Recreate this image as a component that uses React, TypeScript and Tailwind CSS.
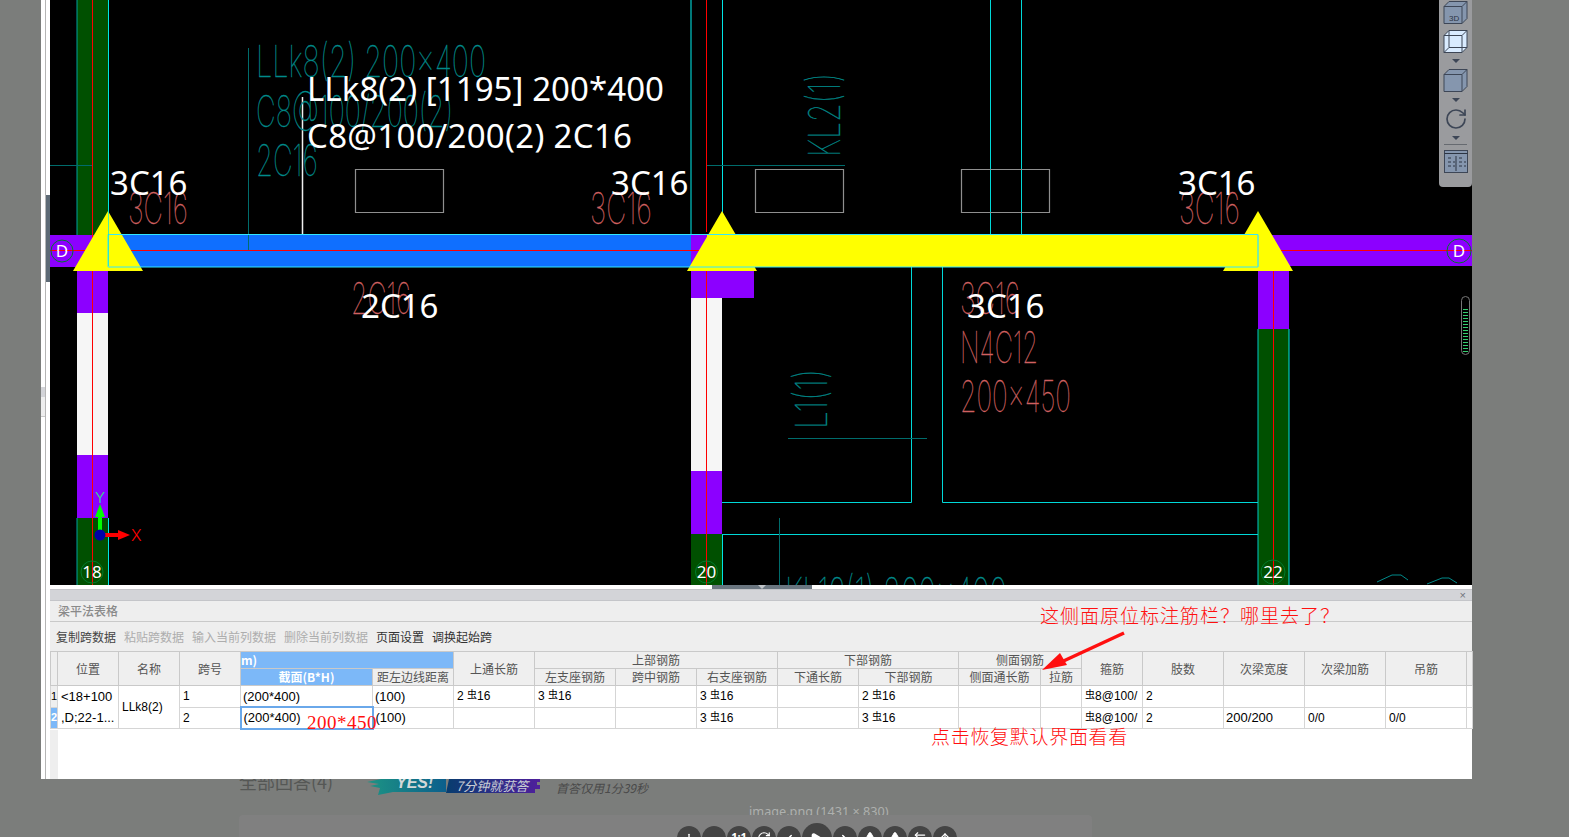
import { ChevronLeft, ChevronRight, Minus, Play, Plus, RotateCw, ArrowUp, ArrowLeftRight, Triangle as TriangleIcon } from 'lucide-react'

const CN = "font-['Noto_Sans_CJK_SC',sans-serif]"

// CAD labels are thin, narrow text squeezed to their measured length
function CadText({ x, y, len, size = 44, color, rotate, children }: { x: number; y: number; len: number; size?: number; color: string; rotate?: boolean; children: string }) {
  return (
    <text
      x={rotate ? 0 : x}
      y={rotate ? 0 : y}
      transform={rotate ? `translate(${x} ${y}) rotate(-90)` : undefined}
      textLength={len}
      lengthAdjust="spacingAndGlyphs"
      fontFamily="Inter, Roboto, sans-serif"
      fontWeight={100}
      fontSize={size}
      fill={color}
      stroke={color}
      strokeWidth={0.3}
    >
      {children}
    </text>
  )
}

function Label({ x, y, size = 33, len, children }: { x: number; y: number; size?: number; len?: number; children: string }) {
  return (
    <text x={x} y={y} textLength={len} fontFamily="'Noto Sans', sans-serif" fontSize={size} fill="#ffffff">
      {children}
    </text>
  )
}

function Bubble({ x, y, r = 11, label }: { x: number; y: number; r?: number; label: string }) {
  return (
    <g>
      <circle cx={x} cy={y} r={r} fill="none" stroke="#007a2c" strokeWidth={1} />
      <text x={x} y={y + 6} textAnchor="middle" fontFamily="'Noto Sans', sans-serif" fontSize={17} fill="#ffffff">
        {label}
      </text>
    </g>
  )
}

function Triangle({ x }: { x: number }) {
  return <polygon points={`${x},211 ${x - 35},271 ${x + 35},271`} fill="#ffff00" />
}

function CadCanvas() {
  const teal = '#008a8a'
  const dull = '#d06060'
  const cyan = '#00e5e5'
  return (
    <svg width={1422} height={585} viewBox="50 0 1422 585" className="block bg-black">
      {/* column 18 */}
      <rect x={77} y={0} width={31} height={235} fill="#005000" />
      <rect x={77} y={271} width={31} height={42} fill="#8c00ff" />
      <rect x={77} y={313} width={31} height={142} fill="#f6f6f6" />
      <rect x={77} y={455} width={31} height={63} fill="#8c00ff" />
      <rect x={77} y={518} width={31} height={67} fill="#005000" />
      <path d="M77 0V235M77 518V585" stroke="#00a0a0" />
      <path d="M108.5 0V235M108.5 518V585" stroke={cyan} />
      <path d="M50 165.5H92" stroke="#006c6c" />

      {/* column 20 */}
      <rect x={691} y={271} width={63} height={27} fill="#8c00ff" />
      <rect x={691} y={298} width={31} height={173} fill="#f6f6f6" />
      <rect x={691} y={471} width={31} height={63} fill="#8c00ff" />
      <rect x={691} y={534} width={31} height={51} fill="#005000" />
      <path d="M691 0V235" stroke="#00a0a0" strokeWidth={1.5} />
      <path d="M722.5 0V235M722.5 534V585" stroke={cyan} />

      {/* column 22 */}
      <rect x={1258} y={271} width={31} height={58} fill="#8c00ff" />
      <rect x={1258} y={329} width={31} height={256} fill="#005000" />
      <path d="M1258 329V585" stroke="#00c8c8" />
      <path d="M1289 329V585" stroke={cyan} />

      {/* walls and secondary beams */}
      <path d="M911.5 267V502.5H722M942.5 267V502.5H1258M722 534.5H1258M990.5 0V235M1021.5 0V235" fill="none" stroke="#00d8d8" />
      <path d="M779.5 518V585M788 438.5H927M707 165.5H845M248.5 48V250" fill="none" stroke="#006c6c" strokeWidth={1} />

      {/* opening boxes */}
      <path d="M355.5 169.5H443.5V212.5H355.5ZM755.5 169.5H843.5V212.5H755.5ZM961.5 169.5H1049.5V212.5H961.5Z" fill="none" stroke="#8f8f8f" strokeWidth={1.2} />
      <path d="M302.5 97V235" stroke="#f0f0f0" strokeWidth={1.5} />

      {/* beam D */}
      <rect x={50} y={235} width={58} height={32} fill="#8c00ff" />
      <rect x={108} y={235} width={583} height={32} fill="#0f6fff" />
      <rect x={691} y={235} width={16} height={32} fill="#8c00ff" />
      <rect x={707} y={235} width={551} height={32} fill="#ffff00" />
      <rect x={1258} y={235} width={214} height={31} fill="#8c00ff" />
      <path d="M248.5 235V250" stroke="#006c6c" />
      <path d="M50 250.5H700M1273 250.5H1472" stroke="#ff0000" />
      <path d="M92.5 0V238M706.5 0V232" stroke="#ff0000" />
      <Triangle x={108} />
      <Triangle x={722} />
      <Triangle x={1258} />
      <rect x={707} y={235} width={551} height={32} fill="#ffff00" />
      <path d="M108 267V234.5H1258V267H108" fill="none" stroke="#33e6ff" strokeWidth={1} />
      <path d="M1258 235V267" stroke="#66e8c0" strokeWidth={1} />
      <path d="M108.5 211V266" stroke={cyan} strokeOpacity={0.7} />
      <path d="M92.5 271V585M706.5 271V585M1273.5 271V585" stroke="#ff0000" />

      {/* original drawing labels */}
      <CadText x={256} y={77} len={230} color={teal}>LLk8(2) 200x400</CadText>
      <CadText x={256} y={127} len={197} color={teal}>C8@100/200(2)</CadText>
      <CadText x={256} y={176} len={62} color={teal}>2C16</CadText>
      <CadText x={840} y={157} len={84} color={teal} rotate>KL2(1)</CadText>
      <CadText x={827} y={429} len={60} color={teal} rotate>L1(1)</CadText>
      <CadText x={785} y={609} len={222} color={teal}>KL16(1) 200x400</CadText>
      <CadText x={128} y={224} len={60} color={dull}>3C16</CadText>
      <CadText x={590} y={224} len={62} color={dull}>3C16</CadText>
      <CadText x={1179} y={224} len={61} color={dull}>3C16</CadText>
      <CadText x={351} y={314} len={60} color={dull}>2C16</CadText>
      <CadText x={960} y={314} len={60} color={dull}>3C16</CadText>
      <CadText x={960} y={363} len={78} color={dull}>N4C12</CadText>
      <CadText x={960} y={412} len={111} color={dull}>200x450</CadText>
      <path d="M1377 582L1392 575H1401L1408 580M1427 584L1442 578H1449L1457 583" fill="none" stroke={teal} />

      {/* selection labels */}
      <Label x={307} y={101} len={357}>LLk8(2) [1195] 200*400</Label>
      <Label x={307} y={148} len={325}>C8@100/200(2) 2C16</Label>
      <Label x={110} y={195}>3C16</Label>
      <Label x={611} y={195}>3C16</Label>
      <Label x={1178} y={195}>3C16</Label>
      <Label x={361} y={318}>2C16</Label>
      <Label x={967} y={318}>3C16</Label>

      <Bubble x={62} y={251} label="D" />
      <Bubble x={1459} y={251} r={12} label="D" />
      <Bubble x={92} y={572} label="18" />
      <Bubble x={706.5} y={572} label="20" />
      <Bubble x={1273} y={572} r={12} label="22" />

      {/* axis marker */}
      <path d="M100 530V510" stroke="#00ff00" strokeWidth={4} />
      <polygon points="100,504 95,517 105,517" fill="#00ff00" />
      <path d="M104 535H120" stroke="#ff0000" strokeWidth={4} />
      <polygon points="130,535 118,530 118,540" fill="#ff0000" />
      <circle cx={100} cy={535} r={5.5} fill="#0000a8" />
      <text x={95} y={503} fontFamily="Inter, sans-serif" fontWeight={300} fontSize={15} fill="#30e080">Y</text>
      <text x={131} y={541} fontFamily="Inter, sans-serif" fontWeight={300} fontSize={16} fill="#ff0000">X</text>

      {/* zoom scroller */}
      <rect x={1461.5} y={296.5} width={8} height={58} rx={4} fill="none" stroke="#777777" />
      {Array.from({ length: 15 }).map((_, i) => (
        <path key={i} d={`M1463 ${309.5 + i * 3}H1468`} stroke="#35d070" />
      ))}
    </svg>
  )
}

function CubeIcon({ fill, inner, label }: { fill: string; inner?: boolean; label?: string }) {
  return (
    <svg width={25} height={24} viewBox="0 0 25 24" className="block">
      <path d="M1 6.5L6 1.5H24V18.5L19 23.5H1Z" fill={fill} stroke="#3d4656" strokeWidth={1} />
      <path d="M1 6.5H19V23.5M19 6.5L24 1.5" fill="none" stroke="#3d4656" strokeWidth={1} />
      {inner && <path d="M6 1.5V18.5H24M6 18.5L1 23.5" fill="none" stroke="#3d4656" strokeWidth={1} />}
      {label && (
        <text x={6} y={21} fontFamily="'Liberation Sans', sans-serif" fontSize={8} fill="#2c3442">
          {label}
        </text>
      )}
    </svg>
  )
}

function Caret() {
  return <div className="w-0 h-0 border-x-[4px] border-x-transparent border-t-[4px] border-t-[#3d4656]" />
}

function SideToolbar() {
  return (
    <div className="absolute top-0 right-0 w-[33px] h-[187px] bg-[#9a9b9e] rounded-b-sm flex flex-col items-center">
      <div><CubeIcon fill="#8596ae" label="3D" /></div>
      <div className="mt-[5px]"><CubeIcon fill="#d9ebff" inner /></div>
      <div className="mt-[6px]"><Caret /></div>
      <div className="mt-[5px]"><CubeIcon fill="#8596ae" /></div>
      <div className="mt-[6px]"><Caret /></div>
      <RotateCw size={24} strokeWidth={1.7} color="#3d4656" className="mt-[5px]" />
      <div className="mt-[5px]"><Caret /></div>
      <div className="mt-[4px] w-[23px] h-px bg-[#666a70]" />
      <svg width={24} height={24} viewBox="0 0 24 24" className="block mt-[4px]">
        <rect x={0.5} y={1.5} width={23} height={22} fill="#8596ae" stroke="#3d4656" />
        <path d="M0.5 4.5H23.5M12 7V22M4 9H7M4 13H7M4 17H7M9 13H11M9 17H11M15 9H18M15 13H18M15 17H18M20 13H22M20 17H22" stroke="#2c3442" fill="none" />
      </svg>
    </div>
  )
}

function Rebar({ n, d, tail = '' }: { n?: string; d: string; tail?: string }) {
  return (
    <span className="whitespace-nowrap">
      {n}
      {n && ' '}
      <span className={`${CN} text-[10px] relative -top-[2px]`}>虫</span>
      {d}
      {tail}
    </span>
  )
}

const th = `border border-[#c9c9c9] bg-[#efefef] text-[12px] leading-none text-[#555555] p-0 overflow-hidden whitespace-nowrap ${CN}`
const normal = `${th} font-normal`
const blue = `${th} !bg-[#7cb8f8] !text-white font-bold`
const td = 'border border-[#d5d5d5] bg-white text-[12px] leading-none text-black pl-[3px] overflow-hidden whitespace-nowrap'
const sized = `${td} !text-[13px] !pl-[2px]`

function BeamTable() {
  const widths = [7, 61, 61, 61, 132, 81, 81, 81, 81, 81, 81, 100, 82, 41, 61, 81, 81, 81, 81, 6]
  return (
    <table className="table-fixed border-collapse w-[1422px] font-['Liberation_Sans',sans-serif]">
      <colgroup>
        {widths.map((w, i) => (
          <col key={i} style={{ width: w }} />
        ))}
      </colgroup>
      <thead>
        <tr className="h-[17px]">
          <th rowSpan={2} className={normal} />
          <th rowSpan={2} className={normal}>位置</th>
          <th rowSpan={2} className={normal}>名称</th>
          <th rowSpan={2} className={normal}>跨号</th>
          <th colSpan={2} className={`${blue} text-left`}>m)</th>
          <th rowSpan={2} className={normal}>上通长筋</th>
          <th colSpan={3} className={normal}>上部钢筋</th>
          <th colSpan={2} className={normal}>下部钢筋</th>
          <th colSpan={2} className={normal}>侧面钢筋</th>
          <th rowSpan={2} className={normal}>箍筋</th>
          <th rowSpan={2} className={normal}>肢数</th>
          <th rowSpan={2} className={normal}>次梁宽度</th>
          <th rowSpan={2} className={normal}>次梁加筋</th>
          <th rowSpan={2} className={normal}>吊筋</th>
          <th rowSpan={2} className={normal} />
        </tr>
        <tr className="h-[17px]">
          <th className={blue}>截面(B*H)</th>
          <th className={normal}>距左边线距离</th>
          <th className={normal}>左支座钢筋</th>
          <th className={normal}>跨中钢筋</th>
          <th className={normal}>右支座钢筋</th>
          <th className={normal}>下通长筋</th>
          <th className={normal}>下部钢筋</th>
          <th className={normal}>侧面通长筋</th>
          <th className={normal}>拉筋</th>
        </tr>
      </thead>
      <tbody>
        <tr className="h-[21px]">
          <td className="border border-[#d5d5d5] bg-[#efefef] text-[11px] text-center p-0 leading-none">1</td>
          <td rowSpan={2} className={`${td} !text-[13px] !leading-[21px]`}>
            <div>&lt;18+100</div>
            <div>,D;22-1...</div>
          </td>
          <td rowSpan={2} className={td}>LLk8(2)</td>
          <td className={td}>1</td>
          <td className={sized}>(200*400)</td>
          <td className={sized}>(100)</td>
          <td className={td}><Rebar n="2" d="16" /></td>
          <td className={td}><Rebar n="3" d="16" /></td>
          <td className={td} />
          <td className={td}><Rebar n="3" d="16" /></td>
          <td className={td} />
          <td className={td}><Rebar n="2" d="16" /></td>
          <td className={td} />
          <td className={td} />
          <td className={td}><Rebar d="8" tail="@100/" /></td>
          <td className={td}>2</td>
          <td className={td} />
          <td className={td} />
          <td className={td} />
          <td className={td} />
        </tr>
        <tr className="h-[21px]">
          <td className="border border-[#d5d5d5] bg-[#7cb8f8] text-[11px] font-bold text-white text-center p-0 leading-none">2</td>
          <td className={td}>2</td>
          <td className={`${sized} !border-2 !border-[#6aa8ea]`}>(200*400)</td>
          <td className={sized}>(100)</td>
          <td className={td} />
          <td className={td} />
          <td className={td} />
          <td className={td}><Rebar n="3" d="16" /></td>
          <td className={td} />
          <td className={td}><Rebar n="3" d="16" /></td>
          <td className={td} />
          <td className={td} />
          <td className={td}><Rebar d="8" tail="@100/" /></td>
          <td className={td}>2</td>
          <td className={sized}>200/200</td>
          <td className={td}>0/0</td>
          <td className={td}>0/0</td>
          <td className={td} />
        </tr>
      </tbody>
    </table>
  )
}

function BeamPanel() {
  return (
    <div className="relative flex-1 flex flex-col bg-white">
      <div className="h-[12px] bg-[#d3d4d8] border-y border-[#c4c5c9] flex justify-end items-center pr-[6px]">
        <span className="text-[11px] leading-none text-[#70737a] font-['Liberation_Sans',sans-serif]">×</span>
      </div>
      <div className={`h-[21px] bg-[#eeeeee] border-b border-[#c9c9c9] flex items-center pl-[8px] text-[12px] font-medium text-[#8a8a8a] ${CN}`}>
        梁平法表格
      </div>
      <div className={`h-[29px] bg-[#eeeeee] flex items-center gap-2 pl-[6px] text-[12px] ${CN}`}>
        <span className="text-[#444444]">复制跨数据</span>
        <span className="text-[#adadad]">粘贴跨数据</span>
        <span className="text-[#adadad]">输入当前列数据</span>
        <span className="text-[#adadad]">删除当前列数据</span>
        <span className="text-[#333333]">页面设置</span>
        <span className="text-[#333333]">调换起始跨</span>
      </div>
      <BeamTable />
      <div className="flex-1 flex">
        <div className="w-[8px] bg-[#eeeeee]" />
      </div>

      {/* markup someone drew on top of the screenshot */}
      <span className={`absolute left-[990px] top-[14px] text-[19px] leading-[24px] tracking-[1px] font-light text-[#ff1010] whitespace-nowrap ${CN}`}>
        {'这侧面原位标注筋栏\uFF1F哪里去了\uFF1F'}
      </span>
      <span className={`absolute left-[881px] top-[135px] text-[19px] leading-[24px] tracking-[0.7px] font-light text-[#ff1010] whitespace-nowrap ${CN}`}>
        点击恢复默认界面看看
      </span>
      <span className="absolute left-[257px] top-[122px] text-[19px] leading-[24px] tracking-[0.5px] text-[#ff1010] font-['Liberation_Serif',serif]">
        200*450
      </span>
      <svg width={100} height={50} viewBox="0 0 100 50" className="absolute left-[985px] top-[38px]">
        <path d="M89 6L22 37" stroke="#ff0f0f" strokeWidth={3.5} />
        <polygon points="7,43 25,26 32,38" fill="#ff0f0f" />
      </svg>
    </div>
  )
}

function AppWindow() {
  return (
    <div className="ml-[41px] w-[1431px] h-[779px] flex shrink-0 bg-white">
      <div className="w-[9px] flex">
        <div className="w-[4px] flex flex-col pt-[387px]">
          <div className="h-[10px] bg-[#d3d4d8]" />
          <div className="h-[20px] bg-[#eeeeee] border-b border-[#c9c9c9]" />
        </div>
        <div className="w-px bg-[#b5b5b5]" />
        <div className="w-[4px] pt-[195px]">
          <div className="h-[87px] bg-[#5d6a75]" />
        </div>
      </div>
      <div className="w-[1422px] flex flex-col">
        <div className="relative h-[585px]">
          <CadCanvas />
          <SideToolbar />
        </div>
        <div className="h-[4px] pl-[662px]">
          <div className="w-[100px] h-[4px] bg-[#6b7680] flex justify-center">
            <div className="w-0 h-0 border-x-[4px] border-x-transparent border-t-[4px] border-t-[#c0c4c8]" />
          </div>
        </div>
        <BeamPanel />
      </div>
    </div>
  )
}

function AnswerBanner() {
  return (
    <svg width={175} height={17} viewBox="0 0 175 17" className="block shrink-0">
      <defs>
        <linearGradient id="brush" x1="0" x2="1" y1="0" y2="0">
          <stop offset="0" stopColor="#1d9484" />
          <stop offset="1" stopColor="#0c5f8c" />
        </linearGradient>
        <linearGradient id="bar" x1="0" x2="1" y1="0" y2="0">
          <stop offset="0" stopColor="#073d6e" />
          <stop offset="1" stopColor="#4f1f9c" />
        </linearGradient>
      </defs>
      <polygon points="2,3 16,0 81,0 81,13 28,13 13,16 15,9 5,7 14,5" fill="url(#brush)" />
      <polygon points="84,0 175,0 175,3 172,3 172,6 175,6 175,10 170,10 170,14 81,14" fill="url(#bar)" />
      <text x={31} y={9} fontFamily="'Liberation Sans', sans-serif" fontStyle="italic" fontWeight={700} fontSize={16} fill="#d4d8d8">
        YES!
      </text>
      <text x={91} y={12} fontFamily="'Noto Sans CJK SC', sans-serif" fontStyle="italic" fontSize={13} fill="#c8ccd4">
        7分钟就获答
      </text>
    </svg>
  )
}

function PageBehind() {
  const before = [
    <Plus key="a" size={16} />,
    <Minus key="b" size={16} />,
    <span key="c" className="text-[11px] font-bold leading-none">1:1</span>,
    <RotateCw key="d" size={14} />,
    <ChevronLeft key="e" size={18} />,
  ]
  const after = [
    <ChevronRight key="f" size={18} />,
    <TriangleIcon key="g" size={12} fill="white" />,
    <TriangleIcon key="h" size={12} fill="white" />,
    <ArrowLeftRight key="i" size={14} />,
    <ArrowUp key="j" size={14} />,
  ]
  return (
    <div className="flex-1 flex flex-col pl-[239px]">
      <div className="h-[17px] flex items-start overflow-hidden">
        <span className={`-mt-[10px] w-[126px] text-[18px] leading-[24px] text-[#555755] ${CN}`}>全部回答(4)</span>
        <AnswerBanner />
        <span className={`ml-[16px] text-[12px] leading-[18px] italic text-[#4a4a4a] ${CN}`}>首答仅用1分39秒</span>
      </div>
      <div className="h-[19px] pl-[510px] flex items-start overflow-hidden">
        <span className="mt-[8px] text-[12.7px] leading-[15px] text-[#aeb0ae] whitespace-nowrap font-['Noto_Sans',sans-serif]">
          image.png (1431 × 830)
        </span>
      </div>
      <div className="w-[853px] h-[22px] rounded-t-sm bg-[#808080] flex items-start gap-px pl-[438px] pt-[11px] overflow-hidden">
        {before.map((b) => (
          <div key={b.key} className="w-[24px] h-[24px] shrink-0 rounded-full bg-[#444444] text-white flex items-start justify-center pt-[5px]">{b}</div>
        ))}
        <div className="w-[30px] h-[30px] -mt-[3px] shrink-0 rounded-full bg-[#444444] text-white flex items-start justify-center pt-[9px]">
          <Play size={16} fill="white" />
        </div>
        {after.map((b) => (
          <div key={b.key} className="w-[24px] h-[24px] shrink-0 rounded-full bg-[#444444] text-white flex items-start justify-center pt-[5px]">{b}</div>
        ))}
      </div>
    </div>
  )
}

export default function App() {
  return (
    <div className="w-[1569px] h-[837px] overflow-hidden bg-[#7b7d7b] flex flex-col">
      <AppWindow />
      <PageBehind />
    </div>
  )
}
